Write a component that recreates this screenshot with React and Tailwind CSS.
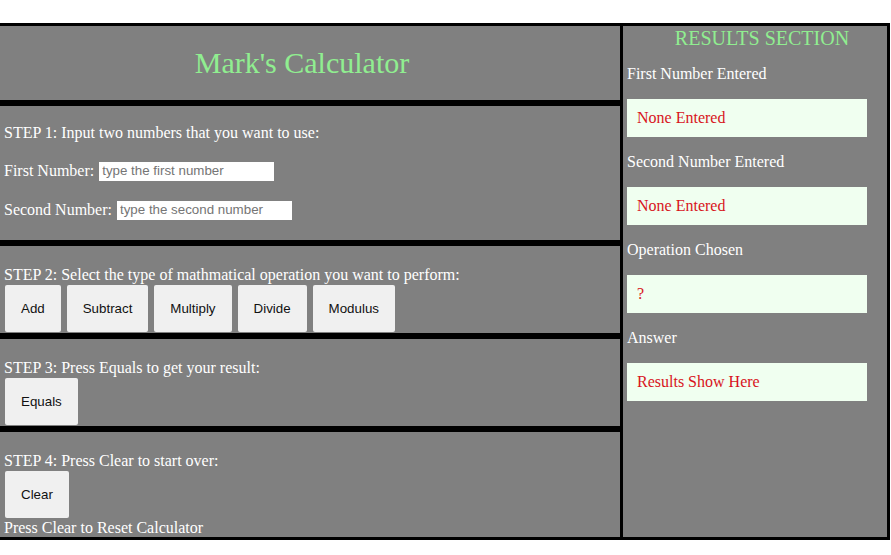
import React from 'react'

const serif = { fontFamily: '"Liberation Serif", "Times New Roman", serif' }

function Btn({ children }) {
  return (
    <button className="h-[47px] px-4 rounded-[2px] bg-[#f0f0f0] text-[13.33px] leading-[15px] text-[#111] font-['Liberation_Sans',Arial,sans-serif]">
      {children}
    </button>
  )
}

function NumberRow({ label, placeholder, className }) {
  return (
    <div className={`flex items-center h-[24px] ${className}`}>
      <span>{label}</span>
      <input
        type="text"
        placeholder={placeholder}
        className="ml-[5px] w-[175px] h-[19px] bg-white px-[3px] text-[13.33px] text-black placeholder:text-[#757575] outline-none font-['Liberation_Sans',Arial,sans-serif]"
      />
    </div>
  )
}

function ResultBox({ label, value, className }) {
  return (
    <div className={className}>
      <div className="leading-[18px]">{label}</div>
      <div className="mt-[16px] w-[240px] h-[38px] flex items-center pl-[10px] bg-[#f0fff0] text-[#d8141c]">
        {value}
      </div>
    </div>
  )
}

export default function App() {
  return (
    <div className="w-[891px] h-[555px] bg-white" style={serif}>
      <div className="mt-[23px] w-[890px] flex border-y-[3px] border-r-[3px] border-black text-white text-[16px]">
        {/* calculator steps */}
        <div className="w-[620px] flex flex-col">
          <div className="h-[77px] flex items-center justify-center pr-[16px] pb-[1px] bg-[#808080] border-b-[3px] border-black">
            <h1 className="text-[30px] text-[#90ee90]">Mark's Calculator</h1>
          </div>

          <div className="bg-[#808080] border-y-[3px] border-black pl-[4px] pt-[18px] pb-[18px]">
            <p className="leading-[18px]">STEP 1: Input two numbers that you want to use:</p>
            <NumberRow label="First Number:" placeholder="type the first number" className="mt-[17px]" />
            <NumberRow label="Second Number:" placeholder="type the second number" className="mt-[15px]" />
          </div>

          <div className="bg-[#808080] border-y-[3px] border-black pl-[4px] pt-[20px] pb-[1px]">
            <p className="leading-[18px]">STEP 2: Select the type of mathmatical operation you want to perform:</p>
            <div className="mt-[1px] ml-[1px] flex gap-[6px]">
              <Btn>Add</Btn>
              <Btn>Subtract</Btn>
              <Btn>Multiply</Btn>
              <Btn>Divide</Btn>
              <Btn>Modulus</Btn>
            </div>
          </div>

          <div className="bg-[#808080] border-y-[3px] border-black pl-[4px] pt-[20px] pb-[1px]">
            <p className="leading-[18px]">STEP 3: Press Equals to get your result:</p>
            <div className="mt-[1px] ml-[1px] flex">
              <Btn>Equals</Btn>
            </div>
          </div>

          <div className="bg-[#808080] border-t-[3px] border-black pl-[4px] pt-[20px] flex-1">
            <p className="leading-[18px]">STEP 4: Press Clear to start over:</p>
            <div className="mt-[1px] ml-[1px] flex">
              <Btn>Clear</Btn>
            </div>
            <p className="pt-[1px] leading-[18px]">Press Clear to Reset Calculator</p>
          </div>
        </div>

        {/* results */}
        <div className="flex-1 bg-[#808080] border-l-[3px] border-black pl-[4px]">
          <h2 className="text-[20px] leading-[24px] text-center pl-[10px] text-[#90ee90]">RESULTS SECTION</h2>
          <ResultBox label="First Number Entered" value="None Entered" className="mt-[15px]" />
          <ResultBox label="Second Number Entered" value="None Entered" className="mt-[16px]" />
          <ResultBox label="Operation Chosen" value="?" className="mt-[16px]" />
          <ResultBox label="Answer" value="Results Show Here" className="mt-[16px]" />
        </div>
      </div>
    </div>
  )
}
